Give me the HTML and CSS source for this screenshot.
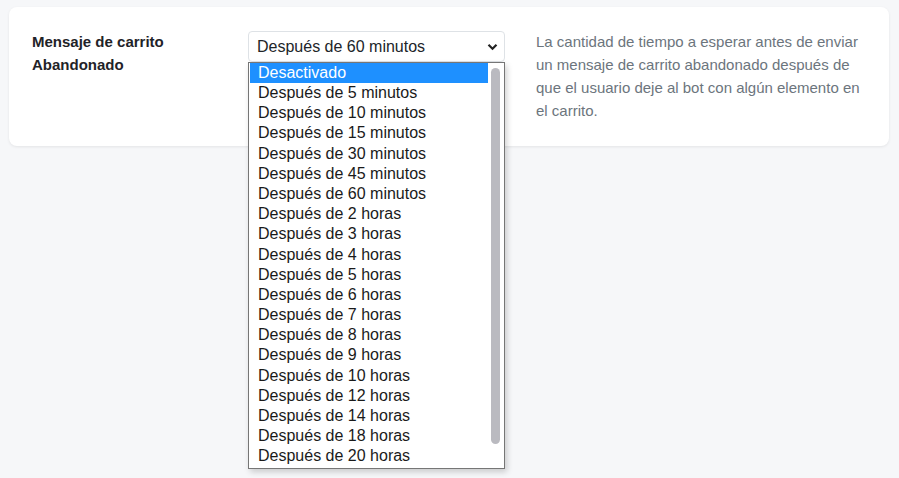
FILE: index.html
```html
<!DOCTYPE html>
<html lang="es">
<head>
<meta charset="utf-8">
<link rel="stylesheet" href="styles.css">
</head>
<body>
<div class="card">
  <div class="label">Mensaje de carrito Abandonado</div>
  <div class="field">
    <div class="select">
      <span class="value">Después de 60 minutos</span>
      <svg class="chev" width="11" height="8" viewBox="0 0 11 8"><path d="M1.5 1.8 L5.5 5.8 L9.5 1.8" fill="none" stroke="#222" stroke-width="2.2"/></svg>
    </div>
    <div class="dropdown">
      <ul class="options">
        <li class="opt active">Desactivado</li>
        <li class="opt">Después de 5 minutos</li>
        <li class="opt">Después de 10 minutos</li>
        <li class="opt">Después de 15 minutos</li>
        <li class="opt">Después de 30 minutos</li>
        <li class="opt">Después de 45 minutos</li>
        <li class="opt">Después de 60 minutos</li>
        <li class="opt">Después de 2 horas</li>
        <li class="opt">Después de 3 horas</li>
        <li class="opt">Después de 4 horas</li>
        <li class="opt">Después de 5 horas</li>
        <li class="opt">Después de 6 horas</li>
        <li class="opt">Después de 7 horas</li>
        <li class="opt">Después de 8 horas</li>
        <li class="opt">Después de 9 horas</li>
        <li class="opt">Después de 10 horas</li>
        <li class="opt">Después de 12 horas</li>
        <li class="opt">Después de 14 horas</li>
        <li class="opt">Después de 18 horas</li>
        <li class="opt">Después de 20 horas</li>
      </ul>
      <div class="track"><div class="thumb"></div></div>
    </div>
  </div>
  <p class="desc">La cantidad de tiempo a esperar antes de enviar un mensaje de carrito abandonado después de que el usuario deje al bot con algún elemento en el carrito.</p>
</div>
</body>
</html>
```
FILE: styles.css
```css
html, body {
  margin: 0;
  padding: 0;
  background: #f6f7f9;
  height: 100%;
  overflow: hidden;
}
body {
  padding: 7px 10px 0 9px;
  font-family: "Liberation Sans", Arial, sans-serif;
}
.card {
  background: #fff;
  border-radius: 8px;
  box-shadow: 0 1px 3px rgba(0,0,0,0.08);
  display: grid;
  grid-template-columns: 185px 257px 1fr;
  column-gap: 31px;
  padding: 24px 22px 22px 23px;
  height: 93px;
}
.label {
  font-weight: bold;
  font-size: 15px;
  line-height: 23px;
  color: #1f2328;
  width: 150px;
  margin-top: -1px;
}
.field {
  position: relative;
}
.select {
  box-sizing: border-box;
  height: 31px;
  border: 1px solid #dee2e6;
  border-radius: 4px;
  display: flex;
  align-items: center;
  justify-content: space-between;
  padding: 0 6px 0 8px;
  font-size: 16px;
  color: #212529;
}
.chev {
  display: block;
  margin-top: 1px;
}
.dropdown {
  position: absolute;
  left: 0;
  top: 31px;
  width: 257px;
  box-sizing: border-box;
  height: 407px;
  background: #fff;
  border: 1px solid #767676;
  box-shadow: 2px 3px 6px rgba(0,0,0,0.18);
  display: flex;
  z-index: 5;
}
.options {
  list-style: none;
  margin: 0;
  padding: 0 0 0 1px;
  flex: 1;
}
.opt {
  height: 20.2px;
  line-height: 20px;
  font-size: 16px;
  color: #1a1a1a;
  padding-left: 8px;
  white-space: nowrap;
}
.opt.active {
  height: 20px;
  background: #1e90ff;
  color: #fff;
}
.track {
  width: 16px;
  position: relative;
}
.thumb {
  position: absolute;
  left: 3px;
  top: 5px;
  width: 9px;
  height: 376px;
  border-radius: 5px;
  background: #babac0;
}
.desc {
  margin: -1px 0 0;
  font-size: 15px;
  line-height: 23px;
  color: #6c757d;
}
```
